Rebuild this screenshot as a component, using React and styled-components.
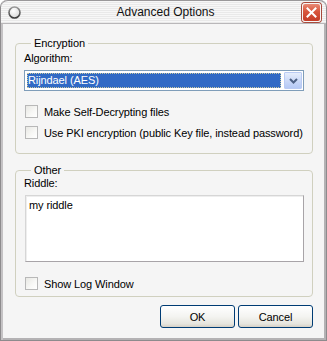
import React from 'react';
import styled, { createGlobalStyle } from 'styled-components';

const Global = createGlobalStyle`
  html, body {
    margin: 0;
    padding: 0;
    background: #ffffff;
  }
  body {
    font-family: Tahoma, "Liberation Sans", Arial, sans-serif;
    font-size: 11px;
    letter-spacing: -0.1px;
    color: #000;
  }
`;

const Window = styled.div`
  width: 327px;
  height: 341px;
  box-sizing: border-box;
  display: flex;
  flex-direction: column;
  background: #f5f5f5;
  border: 1px solid #8d8b8d;
  border-top: none;
  border-radius: 7px 7px 0 0;
  box-shadow: inset 2px 0 0 #c4c2c4, inset -2px 0 0 #b4b2b4, inset 0 -2px 0 #b4b2b4;
  overflow: hidden;
`;

const TitleBar = styled.div`
  height: 22px;
  flex: none;
  display: flex;
  align-items: center;
  padding: 0 5px 0 7px;
  border-top: 1px solid #9a989a;
  border-bottom: 1px solid #b9b7b9;
  border-radius: 7px 7px 0 0;
  background: repeating-linear-gradient(
    to bottom,
    #f7f7f7 0px,
    #f7f7f7 1px,
    #e9e9e9 1px,
    #e9e9e9 2px
  );
`;

const Title = styled.div`
  flex: 1;
  text-align: center;
  font-size: 12px;
  letter-spacing: 0;
  padding-left: 8px;
  color: #111;
`;

const CloseButton = styled.div`
  width: 19px;
  height: 19px;
  box-sizing: border-box;
  display: flex;
  align-items: center;
  justify-content: center;
  border: 1px solid #f6f6f6;
  border-radius: 3px;
  background: linear-gradient(to bottom, #e88a76 0%, #d8553c 45%, #c43c27 100%);
  box-shadow: 0 0 0 1px #a84a3c;
`;

const Body = styled.div`
  flex: 1;
  display: flex;
  flex-direction: column;
  padding: 13px 13px 0 14px;
`;

const Group = styled.fieldset`
  margin: 0 0 ${p => p.$gap}px 0;
  padding: ${p => p.$top}px 8px 0 8px;
  border: 1px solid #d0d0bf;
  border-radius: 4px;
  height: ${p => p.$h}px;
  box-sizing: border-box;
`;

const Legend = styled.legend`
  padding: 0 3px;
  margin-left: 7px;
  line-height: 13px;
  color: #000;
`;

const Label = styled.div`
  line-height: 13px;
`;

const Select = styled.div`
  height: 21px;
  box-sizing: border-box;
  display: flex;
  border: 1px solid #7f9db9;
  background: #fff;
  margin-top: 5px;
`;

const SelectValue = styled.div`
  flex: 1;
  margin: 2px;
  padding-left: 1px;
  background: #316ac5;
  color: #fff;
  line-height: 15px;
  outline: 1px dotted #c8c8a0;
  outline-offset: -1px;
`;

const DropButton = styled.div`
  width: 16px;
  margin: 1px;
  display: flex;
  align-items: center;
  justify-content: center;
  border: 1px solid #bacbf3;
  border-radius: 1px;
  background: linear-gradient(to bottom, #e6eefc 0%, #c7d6f7 60%, #b5c9f5 100%);
`;

const CheckRow = styled.div`
  display: flex;
  align-items: center;
  height: 13px;
  white-space: nowrap;
  margin-top: ${p => p.$mt}px;
  padding-left: 1px;
`;

const Box = styled.div`
  width: 13px;
  height: 13px;
  flex: none;
  box-sizing: border-box;
  border: 1px solid #b8b8b8;
  background: linear-gradient(135deg, #e8e8e4 0%, #f8f8f6 60%, #ffffff 100%);
  margin-right: 6px;
`;

const TextArea = styled.div`
  height: 67px;
  box-sizing: border-box;
  margin: 5px 0 0 1px;
  padding: 3px 3px;
  background: #fff;
  border: 1px solid;
  border-color: #d6d6d6 #a8a4a8 #a8a4a8 #d6d6d6;
  box-shadow: inset 1px 1px 0 #eeeeee;
  line-height: 13px;
`;

const Buttons = styled.div`
  display: flex;
  justify-content: flex-end;
  gap: 3px;
`;

const Button = styled.div`
  width: 75px;
  height: 23px;
  box-sizing: border-box;
  display: flex;
  align-items: center;
  justify-content: center;
  border: 1px solid #003c74;
  border-radius: 3px;
  background: linear-gradient(to bottom, #ffffff 0%, #f4f4f1 50%, #e6e5de 85%, #d6d0c5 100%);
`;

const TitleIcon = () => (
  <svg width="13" height="13" viewBox="0 0 13 13">
    <defs>
      <linearGradient id="ring" x1="0" y1="0" x2="0" y2="1">
        <stop offset="0" stopColor="#9a9a9a" />
        <stop offset="1" stopColor="#3c3c3c" />
      </linearGradient>
      <radialGradient id="fill" cx="0.4" cy="0.35" r="0.7">
        <stop offset="0" stopColor="#ffffff" />
        <stop offset="1" stopColor="#d8d8d8" />
      </radialGradient>
    </defs>
    <circle cx="6.5" cy="6.5" r="5.5" fill="url(#fill)" stroke="url(#ring)" strokeWidth="1.6" />
  </svg>
);

const CloseX = () => (
  <svg width="11" height="11" viewBox="0 0 11 11">
    <path d="M1.5 1.5 L9.5 9.5 M9.5 1.5 L1.5 9.5" stroke="#fff" strokeWidth="2" strokeLinecap="square" />
  </svg>
);

const Chevron = () => (
  <svg width="9" height="6" viewBox="0 0 9 6">
    <path d="M1 1 L4.5 4.5 L8 1" fill="none" stroke="#4d6185" strokeWidth="2" />
  </svg>
);

const Check = ({ mt, children }) => (
  <CheckRow $mt={mt}>
    <Box />
    <span>{children}</span>
  </CheckRow>
);

export default function App() {
  return (
    <>
      <Global />
      <Window>
        <TitleBar>
          <TitleIcon />
          <Title>Advanced Options</Title>
          <CloseButton>
            <CloseX />
          </CloseButton>
        </TitleBar>
        <Body>
          <Group $h={117} $gap={10} $top={2}>
            <Legend>Encryption</Legend>
            <Label>Algorithm:</Label>
            <Select>
              <SelectValue>Rijndael (AES)</SelectValue>
              <DropButton>
                <Chevron />
              </DropButton>
            </Select>
            <Check mt={14}>Make Self-Decrypting files</Check>
            <Check mt={8}>Use PKI encryption (public Key file, instead password)</Check>
          </Group>
          <Group $h={133} $gap={8} $top={0}>
            <Legend>Other</Legend>
            <Label>Riddle:</Label>
            <TextArea>my riddle</TextArea>
            <Check mt={15}>Show Log Window</Check>
          </Group>
          <Buttons>
            <Button>OK</Button>
            <Button>Cancel</Button>
          </Buttons>
        </Body>
      </Window>
    </>
  );
}
